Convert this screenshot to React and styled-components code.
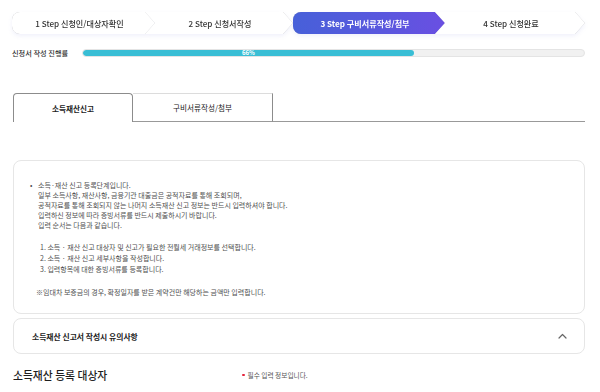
import React from "react";
import styled, { createGlobalStyle } from "styled-components";

const Global = createGlobalStyle`
  html, body { margin: 0; padding: 0; background: #fff; }
  body { width: 600px; height: 392px; overflow: hidden;
    font-family: "Noto Sans CJK KR", "Noto Sans", sans-serif; color: #333; }
  * { box-sizing: border-box; }
`;

const Page = styled.div`
  padding: 12px 15px 0 12px;
  height: 392px;
  overflow: hidden;
  display: flex;
  flex-direction: column;
`;

const Steps = styled.div`
  display: flex;
  flex: 0 0 22px;
  filter: drop-shadow(0 0 0.7px rgba(0, 0, 0, 0.28)) drop-shadow(0 2px 2px rgba(70, 80, 200, 0.08));
`;

const arrow = "polygon(0 0, calc(100% - 10px) 0, 100% 50%, calc(100% - 10px) 100%, 0 100%)";
const notched = "polygon(0 0, calc(100% - 10px) 0, 100% 50%, calc(100% - 10px) 100%, 0 100%, 10px 50%)";

const Step = styled.div`
  flex: 0 0 ${(p) => p.$w}px;
  margin-left: ${(p) => (p.$notch ? -10 : 0)}px;
  padding-left: ${(p) => (p.$notch ? 10 : 0)}px;
  padding-right: 8px;
  height: 22px;
  display: flex;
  align-items: center;
  justify-content: center;
  font-size: 8.1px;
  font-weight: ${(p) => (p.$active ? 700 : 500)};
  color: ${(p) => (p.$active ? "#fff" : "#333")};
  background: ${(p) => (p.$active ? "linear-gradient(90deg, #4760d9 0%, #5a57de 60%, #6a4fe2 100%)" : "#fff")};
  border-radius: ${(p) => (p.$notch ? 0 : 8)}px 0 0 ${(p) => (p.$notch ? 0 : 8)}px;
  clip-path: ${(p) => (p.$notch ? notched : arrow)};
  white-space: nowrap;
`;

const ProgressRow = styled.div`
  display: flex;
  align-items: center;
  margin-top: 14px;
  flex: 0 0 8px;
`;

const ProgressLabel = styled.div`
  flex: 0 0 70px;
  font-size: 7.2px;
  font-weight: 500;
  color: #333;
  white-space: nowrap;
`;

const Track = styled.div`
  flex: 1;
  height: 8px;
  border-radius: 4px;
  background: #f1f1f1;
  border: 1px solid #e4e4e4;
  overflow: hidden;
  display: flex;
`;

const Fill = styled.div`
  height: 100%;
  background: #39bed5;
  border-radius: 4px;
  display: flex;
  align-items: center;
  justify-content: center;
  font-size: 6px;
  font-weight: 700;
  color: #fff;
  line-height: 1;
`;

const Section = styled.div`
  margin-left: 1px;
  flex-shrink: 0;
`;

const TabBar = styled(Section)`
  display: flex;
  margin-top: 35px;
  height: 29px;
  align-items: stretch;
`;

const Tab = styled.div`
  flex: 0 0 ${(p) => p.$w}px;
  display: flex;
  align-items: center;
  justify-content: center;
  font-size: 7.6px;
  font-weight: ${(p) => (p.$active ? 700 : 400)};
  color: #222;
  background: #fff;
  border-style: solid;
  border-color: ${(p) => (p.$active ? "#8c8c8c" : "#dcdcdc #8c8c8c #999 transparent")};
  border-width: ${(p) => (p.$active ? "1px 1px 0 1px" : "1px 1px 1px 0")};
  border-radius: ${(p) => (p.$active ? "4px 4px 0 0" : "0")};
`;

const TabFill = styled.div`
  flex: 1;
  border-bottom: 1px solid #999;
`;

const InfoBox = styled(Section)`
  margin-top: 38px;
  height: 154px;
  border: 1px solid #e6e6e6;
  border-radius: 8px;
  padding: 19px 16px;
  font-size: 7px;
  line-height: 10.1px;
  color: #505050;
`;

const Bullet = styled.div`
  display: flex;
`;

const Dot = styled.span`
  flex: 0 0 8px;
  font-size: 7px;
`;

const Lines = styled.div`
  display: flex;
  flex-direction: column;
`;

const OrderList = styled.ol`
  margin: 12px 0 0 0;
  padding: 0 0 0 10px;
  list-style: none;
  line-height: 11px;
`;

const Note = styled.p`
  margin: 12px 0 0 6px;
`;

const Accordion = styled(Section)`
  margin-top: 4px;
  height: 36px;
  border: 1px solid #e6e6e6;
  border-radius: 8px;
  display: flex;
  align-items: center;
  justify-content: space-between;
  padding: 0 17px 0 18px;
  font-size: 7.8px;
  font-weight: 700;
  color: #222;
`;

const HeadingRow = styled(Section)`
  margin-top: 12px;
  height: 18px;
  display: flex;
  align-items: center;
`;

const Heading = styled.h2`
  flex: 0 0 229px;
  margin: 0;
  font-size: 10.8px;
  font-weight: 500;
  color: #1e1e1e;
`;

const Required = styled.span`
  font-size: 6.7px;
  color: #555;
  display: flex;
  align-items: center;
  gap: 3px;
  &::before {
    content: "";
    width: 2.5px;
    height: 2.5px;
    border-radius: 50%;
    background: #e5243b;
  }
`;

const NextBox = styled(Section)`
  margin-top: 8px;
  height: 40px;
  border: 1px solid #e6e6e6;
  border-radius: 8px;
`;

const ChevronUp = () => (
  <svg width="9" height="6" viewBox="0 0 9 6" fill="none">
    <polyline points="1,5 4.5,1.5 8,5" stroke="#666" strokeWidth="1.2" strokeLinecap="round" strokeLinejoin="round" />
  </svg>
);

const steps = [
  { label: "1 Step 신청인/대상자확인", w: 143 },
  { label: "2 Step 신청서작성", w: 148, notch: true },
  { label: "3 Step 구비서류작성/첨부", w: 152, active: true },
  { label: "4 Step 신청완료", w: 150, notch: true },
];

export default function App() {
  const progress = 66;
  return (
    <>
      <Global />
      <Page>
        <Steps>
          {steps.map((s) => (
            <Step key={s.label} $w={s.w} $notch={s.notch} $active={s.active}>
              {s.label}
            </Step>
          ))}
        </Steps>

        <ProgressRow>
          <ProgressLabel>신청서 작성 진행률</ProgressLabel>
          <Track>
            <Fill style={{ width: `${progress}%` }}>{progress}%</Fill>
          </Track>
        </ProgressRow>

        <TabBar>
          <Tab $w={120} $active>소득재산신고</Tab>
          <Tab $w={140}>구비서류작성/첨부</Tab>
          <TabFill />
        </TabBar>

        <InfoBox>
          <Bullet>
            <Dot>•</Dot>
            <Lines>
              <span>소득·재산 신고 등록단계입니다.</span>
              <span>일부 소득사항, 재산사항, 금융기관 대출금은 공적자료를 통해 조회되며,</span>
              <span>공적자료를 통해 조회되지 않는 나머지 소득재산 신고 정보는 반드시 입력하셔야 합니다.</span>
              <span>입력하신 정보에 따라 증빙서류를 반드시 제출하시기 바랍니다.</span>
              <span>입력 순서는 다음과 같습니다.</span>
            </Lines>
          </Bullet>
          <OrderList>
            <li>1. 소득 · 재산 신고 대상자 및 신고가 필요한 전월세 거래정보를 선택합니다.</li>
            <li>2. 소득 · 재산 신고 세부사항을 작성합니다.</li>
            <li>3. 입력항목에 대한 증빙서류를 등록합니다.</li>
          </OrderList>
          <Note>※임대차 보증금의 경우, 확정일자를 받은 계약건만 해당하는 금액만 입력합니다.</Note>
        </InfoBox>

        <Accordion>
          <span>소득재산 신고서 작성시 유의사항</span>
          <ChevronUp />
        </Accordion>

        <HeadingRow>
          <Heading>소득재산 등록 대상자</Heading>
          <Required>필수 입력 정보입니다.</Required>
        </HeadingRow>

        <NextBox />
      </Page>
    </>
  );
}
